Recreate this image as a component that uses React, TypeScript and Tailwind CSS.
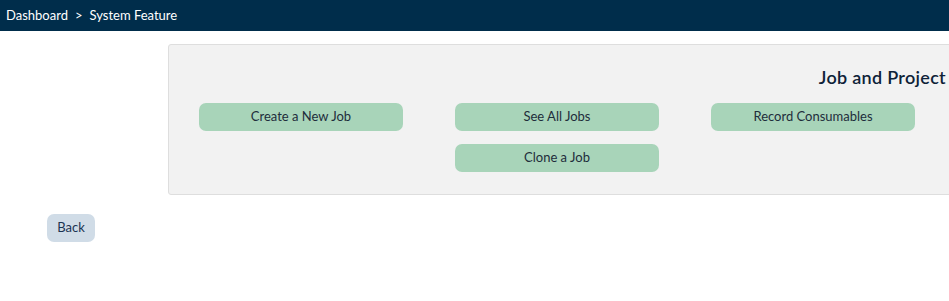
import React from "react";

const btn =
  "h-[28px] w-[204px] rounded-[7px] bg-[#a8d4b9] text-[13px] text-[#1e2d3b] flex items-center justify-center";

export default function App() {
  return (
    <div
      className="w-[949px] h-[301px] overflow-hidden bg-white"
      style={{ fontFamily: "Lato, 'Noto Sans', sans-serif" }}
    >
      <div className="h-[31px] bg-[#002d4b] flex items-center px-[6px] text-white text-[13px]">
        <span>Dashboard</span>
        <span className="mx-[7px]">&gt;</span>
        <span>System Feature</span>
      </div>
      <div className="ml-[168px] mt-[13px] w-[800px] h-[151px] border border-[#dedede] rounded-[3px] bg-[#f2f2f2] pt-[20px] pr-[21px]">
        <div className="text-right text-[18px] font-semibold leading-[24px] text-[#0e2238] tracking-[0.3px]">
          Job and Project
        </div>
        <div className="mt-[14px] pl-[30px] grid grid-cols-[204px_204px_204px] gap-x-[52px] gap-y-[13px]">
          <div className={btn}>Create a New Job</div>
          <div className={btn}>See All Jobs</div>
          <div className={btn}>Record Consumables</div>
          <div />
          <div className={btn}>Clone a Job</div>
        </div>
      </div>
      <div className="ml-[47px] mt-[19px] w-[48px] h-[28px] rounded-[7px] bg-[#d0dce7] text-[13px] text-[#1b3452] flex items-center justify-center">
        Back
      </div>
    </div>
  );
}
